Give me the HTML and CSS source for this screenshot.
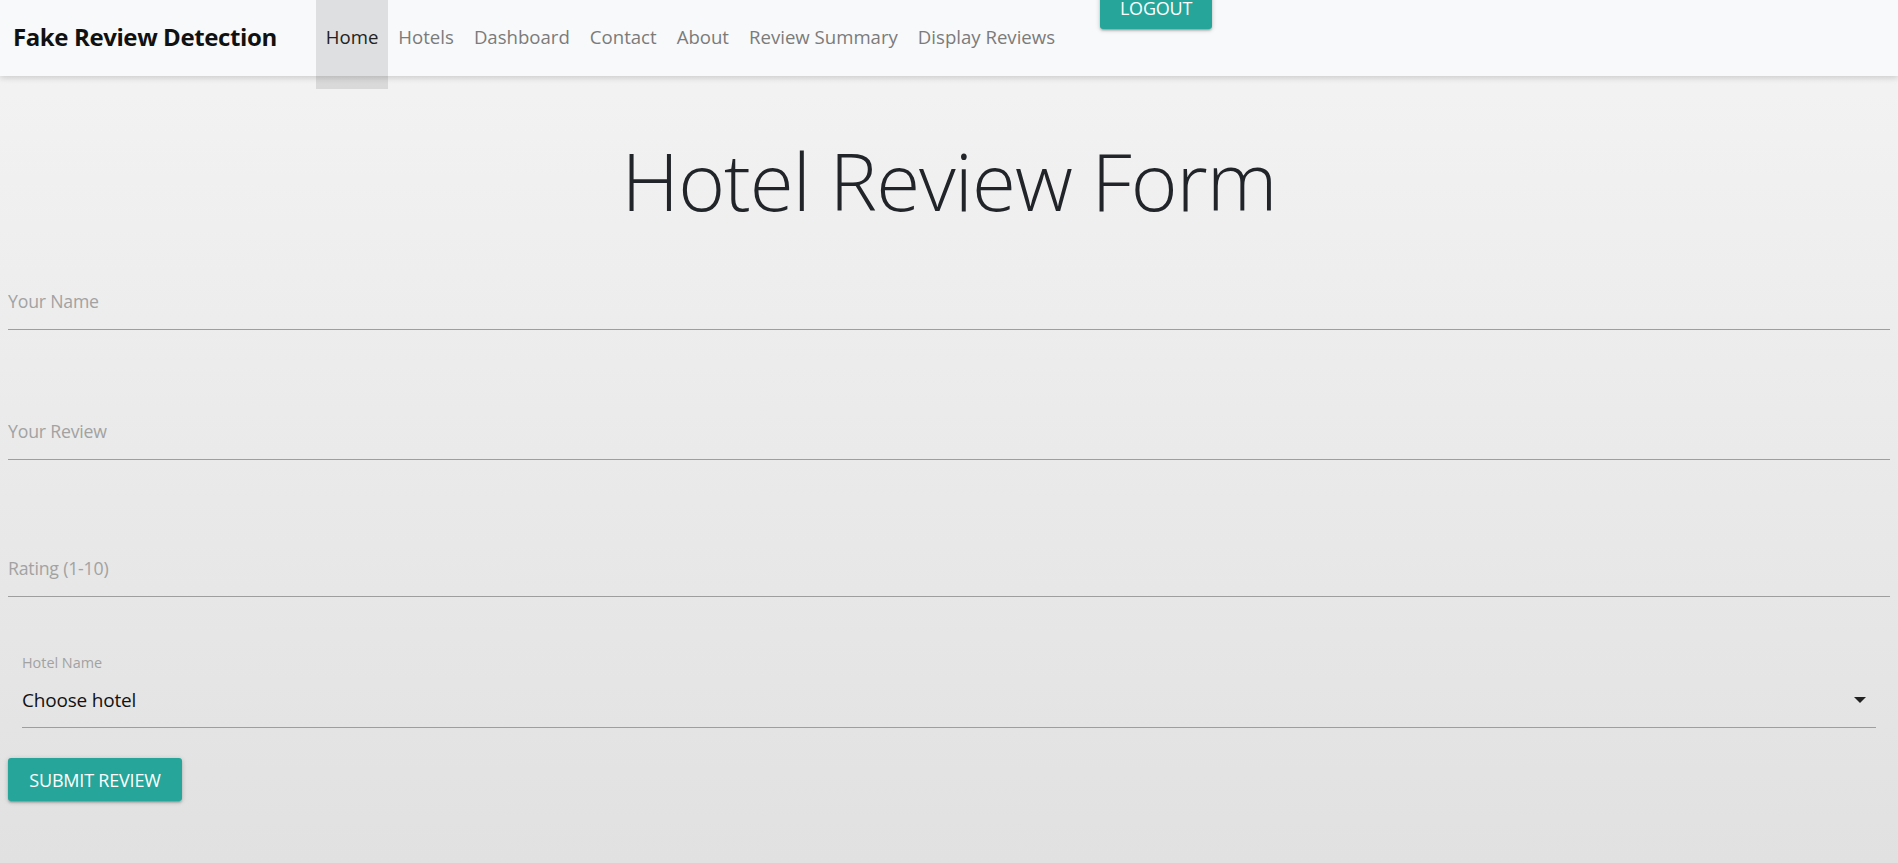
FILE: index.html
```html
<!DOCTYPE html>
<html lang="en">
<head>
<meta charset="utf-8">
<title>Hotel Review Form</title>
<link rel="stylesheet" href="styles.css">
</head>
<body>
<nav class="navbar">
  <a class="brand" href="#">Fake Review Detection</a>
  <ul class="nav-links">
    <li><a class="nav-link active" href="#">Home</a></li>
    <li><a class="nav-link" href="#">Hotels</a></li>
    <li><a class="nav-link" href="#">Dashboard</a></li>
    <li><a class="nav-link" href="#">Contact</a></li>
    <li><a class="nav-link" href="#">About</a></li>
    <li><a class="nav-link" href="#">Review Summary</a></li>
    <li><a class="nav-link" href="#">Display Reviews</a></li>
  </ul>
  <button class="btn logout">LOGOUT</button>
</nav>
<main class="content">
  <h1 class="title">Hotel Review Form</h1>
  <form class="review-form">
    <div class="field field-name"><input type="text" placeholder="Your Name"></div>
    <div class="field field-review"><input type="text" placeholder="Your Review"></div>
    <div class="field field-rating"><input type="text" placeholder="Rating (1-10)"></div>
    <div class="select-field">
      <label class="select-label">Hotel Name</label>
      <div class="select-box">
        <span class="select-value">Choose hotel</span>
        <span class="caret"></span>
      </div>
    </div>
    <button type="button" class="btn submit">SUBMIT REVIEW</button>
  </form>
</main>
</body>
</html>
```
FILE: styles.css
```css
* { box-sizing: border-box; }
html, body { margin: 0; padding: 0; }
body {
  font-family: "Open Sans", "Noto Sans", sans-serif;
  background: linear-gradient(to bottom, #f4f4f4 0%, #e1e1e1 100%);
  min-height: 863px;
  color: #212529;
  overflow: hidden;
}
.navbar {
  height: 76px;
  background: #f8f9fa;
  box-shadow: 0 2px 6px rgba(0,0,0,0.16);
  display: flex;
  align-items: flex-start;
  position: relative;
  z-index: 1;
}
.brand {
  font-size: 24px;
  font-weight: 700;
  color: #111;
  text-decoration: none;
  padding-left: 13px;
  line-height: 74px;
  margin-right: 39px;
  letter-spacing: -0.4px;
}
.nav-links {
  list-style: none;
  margin: 0;
  padding: 0;
  display: flex;
}
.nav-link {
  display: block;
  height: 89px;
  padding: 0 10px;
  line-height: 74px;
  font-size: 18.6px;
  color: #7b7b7b;
  text-decoration: none;
}
.nav-link.active {
  color: #222;
  background: rgba(0,0,0,0.1);
}
.btn {
  border: none;
  background: #26a69a;
  color: #fff;
  font-family: "Open Sans", "Noto Sans", sans-serif;
  font-size: 18px;
  height: 43px;
  border-radius: 3px;
  box-shadow: 0 2px 2px 0 rgba(0,0,0,0.14), 0 3px 1px -2px rgba(0,0,0,0.12), 0 1px 5px 0 rgba(0,0,0,0.2);
  padding: 0;
  letter-spacing: -0.2px;
}
.logout {
  margin-top: -14px;
  margin-left: 35px;
  width: 112px;
}
.content { padding: 0 8px; }
.title {
  margin: 0;
  padding-top: 39px;
  text-align: center;
  font-size: 80px;
  font-weight: 350;
  line-height: 130px;
  letter-spacing: -1px;
  color: #212529;
}
.review-form { display: block; }
.field input {
  display: block;
  width: 100%;
  height: 58px;
  border: none;
  border-bottom: 1px solid #9e9e9e;
  background: transparent;
  font-family: "Open Sans", "Noto Sans", sans-serif;
  font-size: 17.7px;
  padding: 0;
  outline: none;
  letter-spacing: -0.2px;
}
.field input::placeholder { color: #a2a2a2; }
.field-name { margin-top: 27px; }
.field-review { margin-top: 72px; }
.field-rating { margin-top: 79px; }
.select-field {
  margin: 0 14px;
  padding-top: 58px;
}
.select-label {
  display: block;
  font-size: 14.4px;
  color: #a2a2a2;
  line-height: 16px;
}
.select-box {
  display: flex;
  align-items: center;
  justify-content: space-between;
  height: 57px;
  border-bottom: 1px solid #9e9e9e;
  padding-top: 2px;
}
.select-value {
  font-size: 19px;
  color: #111;
  letter-spacing: -0.2px;
}
.caret {
  width: 0;
  height: 0;
  border-left: 6px solid transparent;
  border-right: 6px solid transparent;
  border-top: 6px solid #222;
  margin-right: 10px;
}
.submit {
  display: block;
  margin-top: 30px;
  width: 174px;
}
```
